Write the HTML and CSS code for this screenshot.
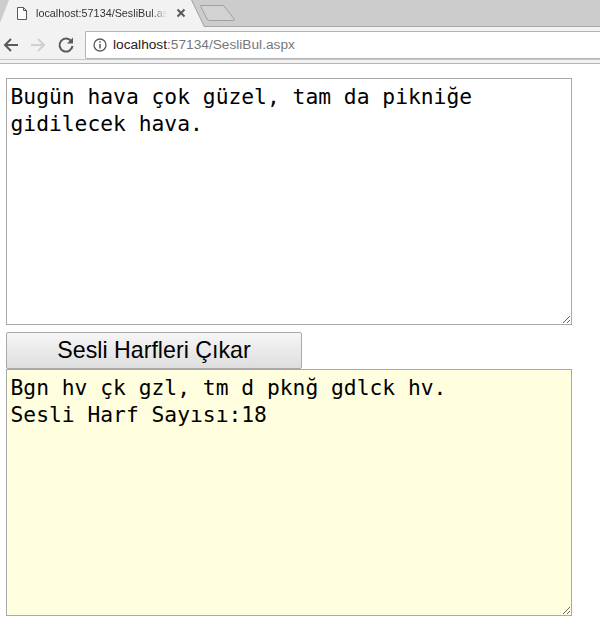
FILE: index.html
```html
<!DOCTYPE html>
<html lang="tr">
<head>
    <meta charset="UTF-8">
    <title>localhost:57134/SesliBul.aspx</title>
    <link rel="stylesheet" href="styles.css">
</head>
<body>
    <div class="tabstrip">
        <div class="tab-edge">
            <div class="tab">
                <svg class="tab-icon" width="12" height="15" viewBox="0 0 12 15">
                    <path d="M1.5 1.5h6l3 3v9h-9z M7.5 1.5v3h3" fill="#fff" stroke="#5a5a5a" stroke-width="1"/>
                </svg>
                <span class="tab-title">localhost:57134/SesliBul.aspx</span>
                <svg class="tab-close" width="10" height="10" viewBox="0 0 10 10">
                    <path d="M1.5 1.5l7 7M8.5 1.5l-7 7" stroke="#5a5a5a" stroke-width="2"/>
                </svg>
            </div>
        </div>
        <svg class="new-tab" width="36" height="18" viewBox="0 0 36 18">
            <path d="M1 1.5h21q2 0 3 1.5l9 12q.5 1.5-1 1.5h-23q-2 0-3-1.5l-6-12q-1-1.500 0-1.500z" fill="#d2d2d2" stroke="#a0a0a0"/>
        </svg>
    </div>
    <div class="toolbar">
        <svg class="nav-icon" width="18" height="18" viewBox="0 0 18 18">
            <path d="M15 9H2M8 3L2 9l6 6" fill="none" stroke="#5a5a5a" stroke-width="2"/>
        </svg>
        <svg class="nav-icon" width="18" height="18" viewBox="0 0 18 18">
            <path d="M1 9h13M8 3l6 6-6 6" fill="none" stroke="#d0d0d0" stroke-width="2"/>
        </svg>
        <svg class="nav-icon" width="18" height="18" viewBox="0 0 18 18">
            <path d="M14.5 5.5A6.5 6.5 0 1 0 15.5 10" fill="none" stroke="#5a5a5a" stroke-width="2"/>
            <path d="M16 1.5v6h-6z" fill="#5a5a5a"/>
        </svg>
        <div class="omnibox">
            <svg width="14" height="14" viewBox="0 0 14 14">
                <circle cx="7" cy="7" r="6" fill="none" stroke="#5a5a5a" stroke-width="1.3"/>
                <path d="M7 6v4.500M7 3.300v1.500" stroke="#5a5a5a" stroke-width="1.5"/>
            </svg>
            <span class="url"><span class="url-host">localhost</span>:57134/SesliBul.aspx</span>
        </div>
    </div>
    <div class="toolbar-edge"></div>

    <form class="content">
        <textarea class="box">Bugün hava çok güzel, tam da pikniğe gidilecek hava.</textarea>
        <button type="button" class="btn">Sesli Harfleri Çıkar</button>
        <textarea class="box result">Bgn hv çk gzl, tm d pknğ gdlck hv.
Sesli Harf Sayısı:18</textarea>
    </form>
</body>
</html>
```

FILE: styles.css
```css
* {
    box-sizing: border-box;
}

body {
    margin: 0;
    background: white;
    font-family: "Liberation Sans", Arial, sans-serif;
}

.tabstrip {
    display: flex;
    align-items: flex-start;
    height: 27px;
    background: #cccccc;
    border-bottom: 1px solid #a5a5a5;
}

.tab-edge {
    flex: none;
    filter: drop-shadow(1px 0 0 #a0a0a0);
}

.tab {
    display: flex;
    align-items: center;
    width: 205px;
    height: 27px;
    padding: 0 0 1px 16px;
    background: #f2f2f2;
    clip-path: polygon(0 23px, 9px 0, 191px 0, 204px 100%, 0 100%);
}

.tab-icon {
    flex: none;
}

.tab-title {
    width: 131px;
    margin-left: 8px;
    overflow: hidden;
    white-space: nowrap;
    font-size: 10.8px;
    color: #333;
    mask-image: linear-gradient(to right, black 115px, transparent 131px);
}

.tab-close {
    flex: none;
    margin-left: 9px;
}

.new-tab {
    flex: none;
    margin: 4px 0 0 -5px;
}

.toolbar {
    display: flex;
    align-items: center;
    height: 32px;
    padding: 4px 0 1px 3px;
    background: #f2f2f2;
}

.nav-icon {
    flex: none;
    margin-right: 9px;
}

.omnibox {
    display: flex;
    align-items: center;
    gap: 6px;
    flex: 1;
    height: 28px;
    margin-left: 1px;
    padding-left: 7px;
    background: white;
    border: 1px solid #b5b5b5;
    border-right: none;
    border-radius: 2px 0 0 2px;
}

.url {
    font-size: 13.7px;
    color: #777;
}

.url-host {
    color: #222;
}

.toolbar-edge {
    height: 5px;
    background: #f2f2f2;
    border-top: 1px solid #c8c8c8;
    border-bottom: 1px solid #b5b5b5;
}

.content {
    display: flex;
    flex-direction: column;
    align-items: flex-start;
    padding: 14px 0 0 6px;
}

.box {
    display: block;
    width: 566px;
    height: 247px;
    padding: 4px 4px 4px 3.5px;
    border: 1px solid #a9a9a9;
    font-family: "DejaVu Sans Mono", monospace;
    font-size: 21.3px;
    line-height: 27px;
    color: black;
    background: white;
    outline: none;
}

.box.result {
    background: #ffffe0;
}

.btn {
    width: 296px;
    height: 37px;
    margin-top: 7px;
    padding: 0;
    border: 1px solid #a9a9a9;
    border-radius: 2px;
    background: linear-gradient(#f6f6f6, #dedede);
    font-family: "Liberation Sans", Arial, sans-serif;
    font-size: 23.2px;
    color: black;
}
```
